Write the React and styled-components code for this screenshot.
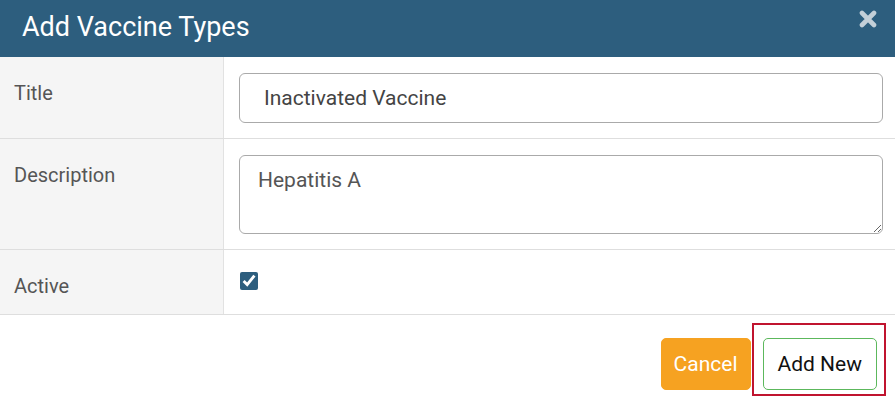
import React from 'react';
import styled, { createGlobalStyle } from 'styled-components';

const GlobalStyle = createGlobalStyle`
  body {
    margin: 0;
    background: #fff;
    font-family: Roboto, "Liberation Sans", Arial, sans-serif;
  }
`;

const Modal = styled.div`
  width: 895px;
  min-height: 411px;
  background: #fff;
`;

const Header = styled.header`
  height: 57px;
  background: #2d5e7e;
  display: flex;
  align-items: center;
  justify-content: space-between;
  padding: 0 18px 0 22px;
  box-sizing: border-box;
`;

const Heading = styled.h1`
  margin: 0 0 4px;
  font-size: 27px;
  font-weight: 400;
  color: #fff;
`;

const CloseButton = styled.button`
  border: 0;
  background: none;
  padding: 0;
  align-self: flex-start;
  margin-top: 10px;
  width: 18px;
  height: 18px;
  cursor: pointer;
`;

const Row = styled.div`
  display: grid;
  grid-template-columns: 224px 1fr;
  min-height: ${(p) => p.$min || 0}px;
  border-bottom: 1px solid #dedede;
`;

const Label = styled.div`
  background: #f5f5f5;
  border-right: 1px solid #e2e2e2;
  padding: 24px 0 0 14px;
  font-size: 20px;
  color: #555;
`;

const Cell = styled.div`
  padding: 16px 12px 15px 15px;
  display: flex;
  align-items: ${(p) => (p.$top ? 'flex-start' : 'stretch')};
`;

const TextInput = styled.input`
  width: 100%;
  height: 50px;
  box-sizing: border-box;
  border: 1px solid #aaa;
  border-radius: 6px;
  padding: 0 24px;
  font-family: inherit;
  font-size: 21px;
  color: #444;
  outline: none;
`;

const TextArea = styled.textarea`
  width: 100%;
  height: 79px;
  box-sizing: border-box;
  border: 1px solid #aaa;
  border-radius: 6px;
  padding: 12px 18px;
  font-family: inherit;
  font-size: 21px;
  color: #555;
  outline: none;
`;

const Check = styled.input`
  width: 18px;
  height: 18px;
  margin: 6px 0 0 1px;
  accent-color: #2d5e7e;
`;

const Footer = styled.footer`
  display: flex;
  justify-content: flex-end;
  align-items: flex-start;
  gap: 12px;
  padding: 8px 9px 16px 0;
`;

const Button = styled.button`
  height: 52px;
  box-sizing: border-box;
  font-family: inherit;
  font-size: 21px;
  border-radius: 5px;
  padding: 0 ${(p) => (p.$primary ? 12 : 14)}px;
  cursor: pointer;
  color: ${(p) => (p.$primary ? '#fff' : '#111')};
  background: ${(p) => (p.$primary ? '#f6a221' : '#fff')};
  border: 1px solid ${(p) => (p.$primary ? '#f6a221' : '#5cb85c')};
`;

const CancelButton = styled(Button)`
  margin-top: 15px;
`;

// red annotation frame around the primary action
const Highlight = styled.div`
  display: flex;
  box-sizing: border-box;
  border: 2px solid #c0142f;
  padding: 13px 7px 4px 9px;
  margin-left: -11px;
`;

const CloseIcon = () => (
  <svg width="18" height="18" viewBox="0 0 18 18">
    <path
      d="M3 3 L15 15 M15 3 L3 15"
      stroke="#c3cfd8"
      strokeWidth="4.6"
      strokeLinecap="round"
    />
  </svg>
);

const App = () => (
  <>
    <GlobalStyle />
    <Modal>
      <Header>
        <Heading>Add Vaccine Types</Heading>
        <CloseButton aria-label="Close">
          <CloseIcon />
        </CloseButton>
      </Header>
      <Row>
        <Label>Title</Label>
        <Cell>
          <TextInput defaultValue="Inactivated Vaccine" />
        </Cell>
      </Row>
      <Row>
        <Label>Description</Label>
        <Cell>
          <TextArea defaultValue="Hepatitis A" />
        </Cell>
      </Row>
      <Row $min={64}>
        <Label>Active</Label>
        <Cell $top>
          <Check type="checkbox" defaultChecked />
        </Cell>
      </Row>
      <Footer>
        <CancelButton $primary>Cancel</CancelButton>
        <Highlight>
          <Button>Add New</Button>
        </Highlight>
      </Footer>
    </Modal>
  </>
);

export default App;
